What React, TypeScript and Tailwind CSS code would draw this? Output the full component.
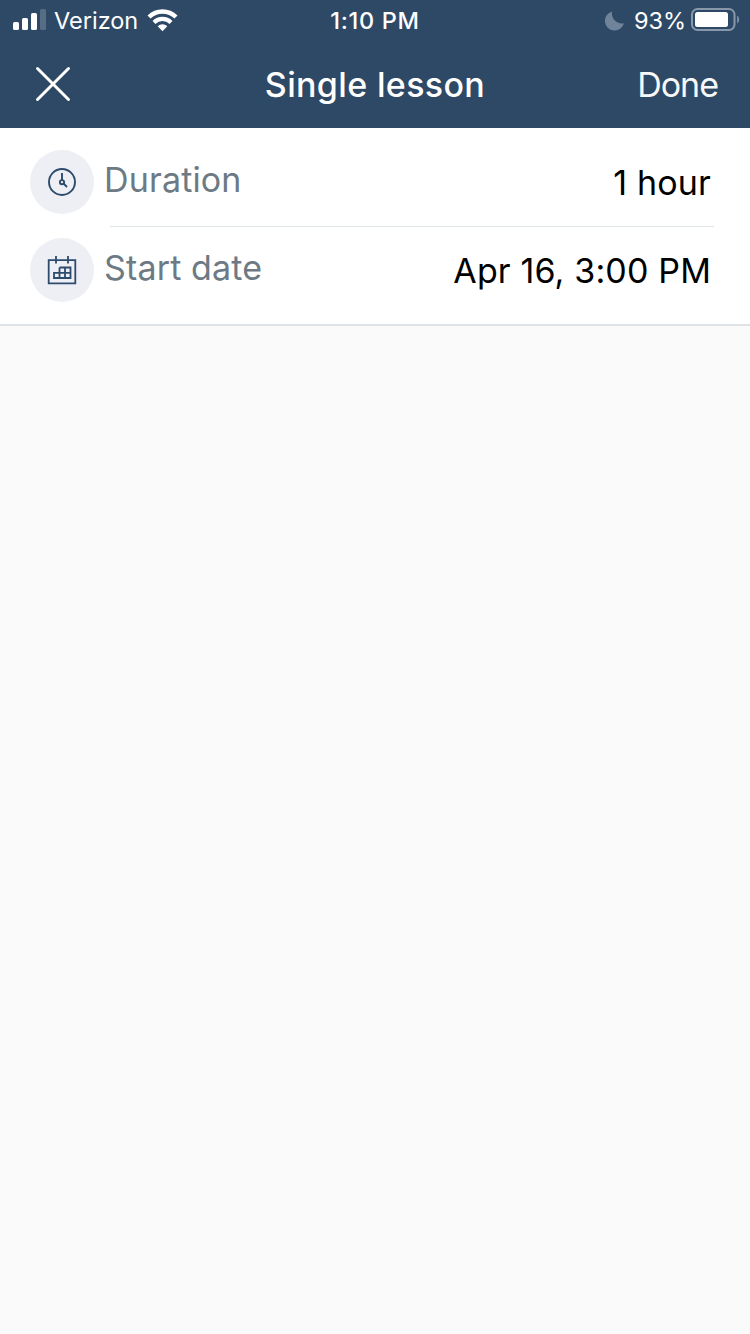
import type { ReactNode } from "react";

function StatusBar() {
  return (
    <div className="grid h-10 grid-cols-[1fr_auto_1fr] items-center text-[23.5px] leading-9">
      <div className="flex h-10 items-center pl-[13px]">
        <svg className="h-10 w-[33px] shrink-0" viewBox="0 0 33 40" fill="white">
          <rect x="0" y="22" width="6" height="8" rx="1.5" />
          <rect x="9" y="18" width="6" height="12" rx="1.5" />
          <rect x="18" y="13" width="6" height="17" rx="1.5" />
          <rect x="27" y="9" width="6" height="21" rx="1.5" opacity="0.2" />
        </svg>
        <span className="ml-2 w-[86px] whitespace-nowrap pt-0.5">Verizon</span>
        <svg className="ml-[7px] h-10 w-[31px] shrink-0" viewBox="0 0 31 40" fill="none">
          <path d="M2 17 A19.5 19.5 0 0 1 29 17" stroke="white" strokeWidth="4.4" />
          <path d="M7 22.4 A12.2 12.2 0 0 1 24 22.4" stroke="white" strokeWidth="4.2" />
          <path d="M15.5 31.2 L10.7 26.2 A7 7 0 0 1 20.3 26.2 Z" fill="white" />
        </svg>
      </div>
      <span className="whitespace-nowrap pt-0.5 font-medium tracking-[0.7px]">1:10 PM</span>
      <div className="flex h-10 items-center justify-end pr-2.5">
        <svg className="h-10 w-5 shrink-0" viewBox="0 0 20 40">
          <path
            d="M7.2 11.4 A9.7 9.7 0 1 0 19 23.2 A9.8 9.8 0 0 1 7.2 11.4 Z"
            fill="#6f839b"
          />
        </svg>
        <span className="ml-[9px] w-[53px] whitespace-nowrap pt-0.5">93%</span>
        <svg className="ml-1 h-10 w-[49px] shrink-0" viewBox="0 0 49 40">
          <rect x="1" y="9" width="42.5" height="21" rx="5.5" fill="none" stroke="#8897aa" strokeWidth="2" />
          <rect x="4" y="12" width="33" height="15" rx="2.5" fill="white" />
          <path d="M46.2 15.5 C48.7 17 48.7 22 46.2 23.5 Z" fill="#8897aa" />
        </svg>
      </div>
    </div>
  );
}

function NavBar() {
  return (
    <div className="grid h-[88px] grid-cols-[1fr_auto_1fr] items-center text-[34px]">
      <button className="ml-[35px] w-9" aria-label="Close">
        <svg className="h-9 w-9" viewBox="0 0 36 36" fill="none" stroke="white" strokeWidth="3" strokeLinecap="round">
          <path d="M2.5 2.5 L33.5 33.5 M33.5 2.5 L2.5 33.5" />
        </svg>
      </button>
      <h1 className="whitespace-nowrap font-[550] tracking-[0.35px]">Single lesson</h1>
      <button className="justify-self-end pr-8 tracking-[-1px] text-[#f7f8f9]">Done</button>
    </div>
  );
}

function ClockIcon() {
  return (
    <svg className="h-11 w-11" viewBox="0 0 44 44" fill="none" stroke="#2d4b6d" strokeWidth="1.9">
      <circle cx="22" cy="22" r="13" />
      <circle cx="22" cy="22.2" r="2.1" />
      <path d="M22 13 V20 M23.5 23.5 L27 27" />
    </svg>
  );
}

function CalendarIcon() {
  return (
    <svg className="h-11 w-11" viewBox="0 0 44 44" fill="none" stroke="#2d4b6d" strokeWidth="1.8">
      <path d="M8.7 12.2 H35.3 V35.3 H8.7 Z" />
      <path d="M16 8 V15.5 M28 8 V15.5" />
      <path d="M19.5 19.5 H30.5 V30 H14 V24.8 H30.5 M19.5 19.5 V30 M25 19.5 V30" />
    </svg>
  );
}

type RowProps = {
  icon: ReactNode;
  label: string;
  value: string;
};

function Row({ icon, label, value }: RowProps) {
  return (
    <div className="flex h-16 items-center pl-[30px] pr-[39px] text-[34px] leading-[44px]">
      <div className="flex h-16 w-16 shrink-0 items-center justify-center rounded-full bg-[#eeeff4]">
        {icon}
      </div>
      <span className="mb-1 ml-2.5 tracking-[0.15px] text-[#6d7a84]">{label}</span>
      <span className="ml-auto mt-0.5 tracking-[0.15px] text-black">{value}</span>
    </div>
  );
}

export default function App() {
  return (
    <div className="min-h-[1334px] bg-[#fafafa] font-['Inter',sans-serif]">
      <header className="bg-[#2e4966] text-white">
        <StatusBar />
        <NavBar />
      </header>

      <main className="h-[198px] border-b-2 border-[#dde3e7] bg-white pt-[22px]">
        <Row icon={<ClockIcon />} label="Duration" value="1 hour" />
        <div className="ml-[110px] mr-9 mt-3 mb-[11px] h-px bg-[#dfe6e8]" />
        <Row icon={<CalendarIcon />} label="Start date" value="Apr 16, 3:00 PM" />
      </main>
    </div>
  );
}
